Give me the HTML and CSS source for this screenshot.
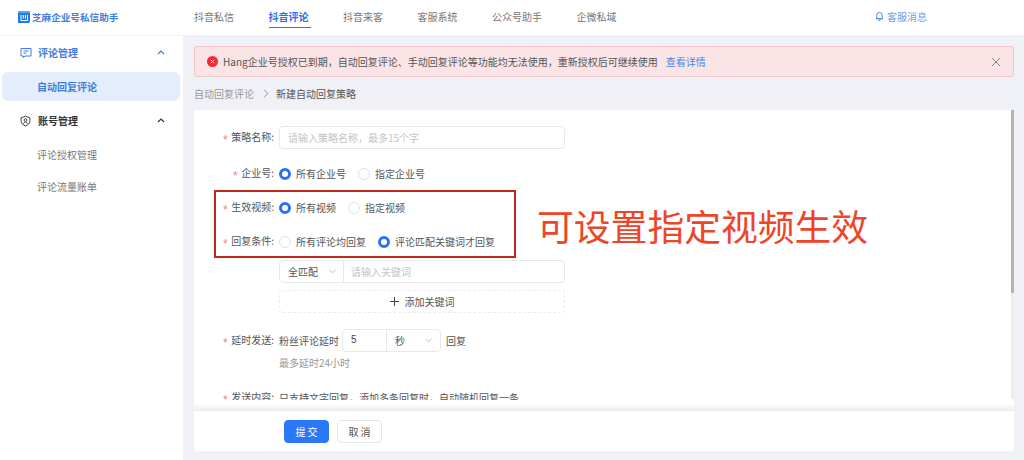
FILE: index.html
```html
<!DOCTYPE html>
<html>
<head>
    <meta charset="UTF-8">
    <title>新建自动回复策略</title>
    <link rel="stylesheet" href="styles.css">
</head>
<body>
    <header class="topbar">
        <div class="brand">
            <svg class="brand-icon" viewBox="0 0 12 12">
                <path d="M1.500 0H12v10a2 2 0 0 1-2 2H0V1.500A1.500 1.500 0 0 1 1.500 0z" fill="#1f7ce8"/>
                <path d="M1.500 0H12v2H0V1.500A1.500 1.500 0 0 1 1.500 0z" fill="#5aa6f5"/>
                <path d="M3 4v5.500h6.500V4M5.300 4v3.500M7.400 4v3.500" fill="none" stroke="#fff" stroke-width="1"/>
            </svg>
            <span>芝麻企业号私信助手</span>
        </div>
        <nav class="nav">
            <a>抖音私信</a>
            <a class="active">抖音评论</a>
            <a>抖音来客</a>
            <a>客服系统</a>
            <a>公众号助手</a>
            <a>企微私域</a>
        </nav>
        <div class="notice">
            <svg class="bell" viewBox="0 0 10 12">
                <path d="M2 8.500V4.500a3 3 0 0 1 6 0v4zM1 8.500h8M4 10.500h2" fill="none" stroke="#4a86e8" stroke-width="1.100"/>
            </svg>
            <span>客服消息</span>
        </div>
    </header>

    <div class="layout">
        <aside class="sidebar">
            <div class="menu-group open">
                <svg class="menu-icon" viewBox="0 0 12 12">
                    <path d="M1 1.500h10v7.500H5l-1.500 1.500V9H1z" fill="none" stroke="#3c7cf0" stroke-width="1"/>
                    <path d="M3.500 4h5M3.500 6.200h3" stroke="#3c7cf0" stroke-width="1"/>
                </svg>
                <span>评论管理</span>
                <svg class="caret" viewBox="0 0 8 5"><path d="M1 4l3-3 3 3" fill="none" stroke="#3c7cf0" stroke-width="1.200"/></svg>
            </div>
            <div class="menu-item active">自动回复评论</div>
            <div class="menu-group account">
                <svg class="menu-icon" viewBox="0 0 12 12">
                    <path d="M6 .8l4.800 1.700v3.800c0 2.500-2.200 4.300-4.800 5-2.600-.7-4.800-2.500-4.800-5V2.500z" fill="none" stroke="#333" stroke-width="1"/>
                    <circle cx="6" cy="5" r="1.500" fill="none" stroke="#333" stroke-width="1"/>
                    <path d="M3.800 9c.5-1.300 1.300-1.800 2.200-1.800s1.700.5 2.200 1.800" fill="none" stroke="#333" stroke-width="1"/>
                </svg>
                <span>账号管理</span>
                <svg class="caret" viewBox="0 0 8 5"><path d="M1 4l3-3 3 3" fill="none" stroke="#333" stroke-width="1.200"/></svg>
            </div>
            <div class="menu-item">评论授权管理</div>
            <div class="menu-item">评论流量账单</div>
        </aside>

        <main class="content">
            <div class="alert">
                <svg class="alert-icon" viewBox="0 0 10 10">
                    <circle cx="5" cy="5" r="5" fill="#ee2b3b"/>
                    <path d="M3.500 3.500l3 3M6.500 3.500l-3 3" stroke="#fff" stroke-width=".9"/>
                </svg>
                <span class="alert-text">Hang企业号授权已到期，自动回复评论、手动回复评论等功能均无法使用，重新授权后可继续使用</span>
                <a class="alert-link">查看详情</a>
                <svg class="alert-close" viewBox="0 0 10 10"><path d="M1 1l8 8M9 1l-8 8" stroke="#888" stroke-width="1"/></svg>
            </div>

            <div class="breadcrumb">
                <span class="crumb-link">自动回复评论</span>
                <svg class="crumb-sep" viewBox="0 0 6 10"><path d="M1 1l4 4-4 4" fill="none" stroke="#888" stroke-width="1"/></svg>
                <span class="crumb-current">新建自动回复策略</span>
            </div>

            <section class="card">
                <div class="card-body">
                    <form class="form">
                        <div class="row row-name">
                            <label class="row-label"><i>*</i>策略名称:</label>
                            <div class="input wide placeholder">请输入策略名称，最多15个字</div>
                        </div>
                        <div class="row row-company">
                            <label class="row-label"><i>*</i>企业号:</label>
                            <span class="radio checked">所有企业号</span>
                            <span class="radio">指定企业号</span>
                        </div>
                        <div class="row row-radio">
                            <label class="row-label"><i>*</i>生效视频:</label>
                            <span class="radio checked">所有视频</span>
                            <span class="radio">指定视频</span>
                        </div>
                        <div class="row row-radio">
                            <label class="row-label"><i>*</i>回复条件:</label>
                            <span class="radio">所有评论均回复</span>
                            <span class="radio checked">评论匹配关键词才回复</span>
                        </div>
                        <div class="row row-keyword">
                            <div class="input-group">
                                <div class="select match">全匹配<svg class="arrow" viewBox="0 0 8 5"><path d="M.5.500L4 4 7.500.500" fill="none" stroke="#aaa" stroke-width=".9"/></svg></div>
                                <div class="group-input placeholder">请输入关键词</div>
                            </div>
                        </div>
                        <div class="row row-add">
                            <div class="add-btn"><svg class="plus" viewBox="0 0 9 9"><path d="M4.500 0v9M0 4.500h9" stroke="#444" stroke-width="1"/></svg>添加关键词</div>
                        </div>
                        <div class="row row-delay">
                            <label class="row-label"><i>*</i>延时发送:</label>
                            <span class="delay-text">粉丝评论延时</span>
                            <div class="input-group delay-group">
                                <div class="delay-num">5</div>
                                <div class="select unit">秒<svg class="arrow" viewBox="0 0 8 5"><path d="M.5.500L4 4 7.500.500" fill="none" stroke="#aaa" stroke-width=".9"/></svg></div>
                            </div>
                            <span class="delay-after">回复</span>
                        </div>
                        <div class="hint">最多延时24小时</div>
                        <div class="row row-send">
                            <label class="row-label"><i>*</i>发送内容:</label>
                            <span class="send-text">只支持文字回复，添加多条回复时，自动随机回复一条</span>
                        </div>
                    </form>
                    <div class="scrollbar"><div class="scroll-thumb"></div></div>
                </div>
                <div class="footer-shade"></div>
                <div class="card-footer">
                    <button class="btn primary" type="button">提 交</button>
                    <button class="btn" type="button">取 消</button>
                </div>
            </section>
        </main>
    </div>

    <!-- annotation drawn on top of the screenshot -->
    <div class="mark-box"></div>
    <div class="mark-text">可设置指定视频生效</div>
</body>
</html>
```

FILE: styles.css
```css
*, *::before, *::after {
    box-sizing: border-box;
}
html, body {
    height: 100%;
}
body {
    margin: 0;
    display: flex;
    flex-direction: column;
    height: 460px;
    overflow: hidden;
    background: #f0f1f6;
    color: #444;
    font-family: "Noto Sans CJK SC", "Liberation Sans", sans-serif;
    font-size: 10px;
}

/* top bar */
.topbar {
    display: flex;
    align-items: center;
    height: 35px;
    padding-bottom: 2px;
    background: #fff;
    flex-shrink: 0;
}
.brand {
    display: flex;
    align-items: center;
    width: 194px;
    padding-left: 18px;
    color: #3f7de0;
    font-weight: 700;
    font-size: 9.600px;
}
.brand-icon {
    width: 12px;
    height: 12px;
    margin-right: 2px;
}
.nav {
    display: flex;
    gap: 34.500px;
    height: 100%;
    flex: 1;
}
.nav a {
    display: flex;
    align-items: center;
    height: 100%;
    color: #777;
}
.nav a.active {
    color: #2d6fe8;
    font-weight: 700;
    position: relative;
}
.nav a.active::after {
    content: "";
    position: absolute;
    left: 0;
    right: -2px;
    bottom: 5px;
    height: 1px;
    background: #2d6fe8;
}
.notice {
    display: flex;
    align-items: center;
    gap: 3px;
    width: 149px;
    color: #6f9be8;
}
.bell {
    width: 9px;
    height: 11px;
}

/* sidebar */
.layout {
    display: flex;
    flex: 1;
    min-height: 0;
}
.sidebar {
    width: 183px;
    flex-shrink: 0;
    padding: 0 3px 0 2px;
    background: #fff;
    box-shadow: inset 0 1px 0 #f3f3f6;
}
.menu-group {
    display: flex;
    align-items: center;
    height: 35px;
    padding: 0 15px 0 18px;
    color: #333;
    font-weight: 700;
}
.menu-group.open {
    color: #3f7de0;
    margin-bottom: 2px;
}
.menu-group.account {
    margin-top: 2px;
}
.menu-group.account .menu-icon {
    width: 11px;
    height: 12px;
    margin-right: 7px;
}
.menu-icon {
    width: 12px;
    height: 12px;
    margin-right: 6px;
}
.caret {
    width: 8px;
    height: 5px;
    margin-left: auto;
}
.menu-item {
    display: flex;
    align-items: center;
    height: 32px;
    padding-left: 35px;
    border-radius: 6px;
    color: #777;
}
.menu-item.active {
    height: 29px;
    color: #3f7de0;
    font-weight: 700;
    background: #e4edfc;
}

/* main */
.content {
    display: flex;
    flex-direction: column;
    flex: 1;
    min-width: 0;
    padding: 11px 10px 9px 11px;
}
.alert {
    display: flex;
    align-items: center;
    height: 31px;
    padding: 0 12px 0 12px;
    flex-shrink: 0;
    background: #fbe4e6;
    border: 1px solid #f3c6ca;
    border-radius: 3px;
    color: #555;
}
.alert-icon {
    width: 11px;
    height: 11px;
    margin-right: 5px;
}
.alert-link {
    margin-left: 8px;
    color: #4a86e8;
}
.alert-close {
    width: 10px;
    height: 10px;
    margin-left: auto;
}
.breadcrumb {
    display: flex;
    align-items: center;
    height: 33px;
    flex-shrink: 0;
}
.crumb-link {
    color: #999;
}
.crumb-sep {
    width: 6px;
    height: 9px;
    margin: 0 7px 0 9px;
}
.crumb-current {
    color: #555;
}

/* card */
.card {
    display: flex;
    flex-direction: column;
    flex: 1;
    min-height: 0;
    background: #fff;
    border-radius: 0 0 4px 4px;
}
.card-body {
    display: flex;
    flex: 1;
    min-height: 0;
}
.form {
    flex: 1;
    height: 290px;
    padding-top: 16px;
    overflow: hidden;
}
.scrollbar {
    width: 3px;
    height: 289px;
    background: #eeeef1;
}
.scroll-thumb {
    height: 183px;
    background: #b4b4b4;
}
.row {
    display: flex;
    align-items: center;
    height: 23px;
    padding-left: 85px;
    position: relative;
}
.row-label {
    position: absolute;
    left: 0;
    width: 80px;
    text-align: right;
    color: #555;
}
.row-label i {
    margin-right: 3.500px;
    color: #ef7f7f;
    font-family: "Liberation Sans", sans-serif;
    font-style: normal;
    font-size: 12px;
    line-height: 1;
    vertical-align: -3px;
}
.row-company {
    margin-top: 13px;
}
.row-radio {
    margin-top: 11px;
}
.row-keyword {
    margin-top: 7px;
}
.row-add {
    margin-top: 7px;
}
.row-delay {
    margin-top: 16px;
}
.row-send {
    margin-top: 16px;
}
.hint {
    padding-left: 85px;
    margin-top: 3px;
    color: #999;
}
.input {
    display: flex;
    align-items: center;
    height: 23px;
    border: 1px solid #e8e8ea;
    border-radius: 4px;
    padding: 0 8px;
}
.wide {
    width: 286px;
}
.placeholder {
    color: #c4c4c4;
}
.radio {
    display: inline-flex;
    align-items: center;
    margin-right: 12px;
    color: #555;
}
.radio::before {
    content: "";
    width: 12px;
    height: 12px;
    margin-right: 5px;
    border: 1px solid #e2e2e4;
    border-radius: 50%;
    background: #fff;
}
.radio.checked::before {
    border: 3.500px solid #2a72f5;
}
.input-group {
    display: flex;
    width: 286px;
    height: 23px;
    border: 1px solid #e8e8ea;
    border-radius: 4px;
}
.select {
    display: flex;
    align-items: center;
    justify-content: space-between;
    color: #555;
}
.match {
    width: 64px;
    padding: 0 7px 0 8px;
    border-right: 1px solid #e8e8ea;
}
.arrow {
    width: 7px;
    height: 5px;
}
.group-input {
    display: flex;
    align-items: center;
    padding-left: 7px;
}
.add-btn {
    display: flex;
    align-items: center;
    justify-content: center;
    width: 286px;
    height: 23px;
    border: 1px dashed #ececee;
    border-radius: 4px;
    color: #555;
}
.plus {
    width: 9px;
    height: 9px;
    margin-right: 6px;
}
.delay-text {
    color: #555;
}
.delay-group {
    width: 99px;
    margin-left: 3px;
}
.delay-num {
    display: flex;
    align-items: center;
    width: 44px;
    padding: 0 0 2px 8px;
    border-right: 1px solid #e8e8ea;
    font-family: "Liberation Sans", sans-serif;
}
.unit {
    flex: 1;
    padding: 0 8px;
}
.delay-after {
    margin-left: 5px;
    color: #555;
}
.send-text {
    color: #555;
}
.footer-shade {
    height: 7px;
    flex-shrink: 0;
    background: linear-gradient(#fff, #ebebee);
}
.card-footer {
    display: flex;
    align-items: center;
    gap: 8px;
    height: 40px;
    padding-left: 90px;
    flex-shrink: 0;
}
.btn {
    width: 45px;
    height: 23px;
    padding: 0;
    border: 1px solid #e6e6e8;
    border-radius: 4px;
    background: #fff;
    color: #555;
    font-family: inherit;
    font-size: 10px;
}
.btn.primary {
    border-color: #2a78f8;
    background: #2a78f8;
    color: #fff;
}

/* annotation layer */
.mark-box {
    position: absolute;
    left: 214px;
    top: 190px;
    width: 302px;
    height: 68px;
    border: 2px solid #c4261d;
}
.mark-text {
    position: absolute;
    left: 537px;
    top: 199px;
    font-size: 36.800px;
    line-height: 52px;
    color: #ee4528;
    font-weight: 400;
    white-space: nowrap;
}
```
